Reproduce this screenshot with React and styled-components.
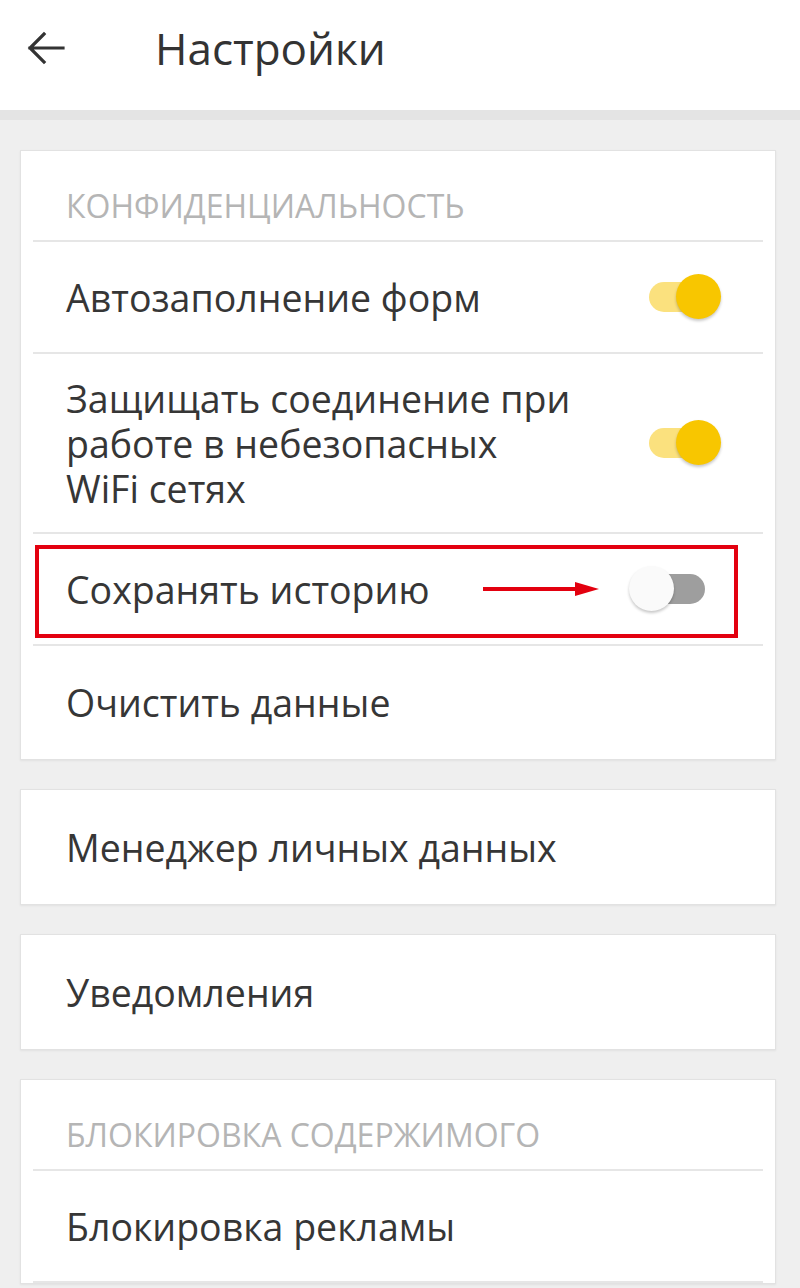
import React from "react";
import styled, { createGlobalStyle } from "styled-components";

const GlobalStyle = createGlobalStyle`
  html, body {
    margin: 0;
    padding: 0;
    background: #efefef;
    font-family: "Open Sans", "Noto Sans", sans-serif;
  }
`;

const Page = styled.div`
  width: 800px;
  height: 1288px;
  overflow: hidden;
  background: #efefef;
  display: flex;
  flex-direction: column;
`;

const Header = styled.header`
  height: 120px;
  background: #fff;
  display: flex;
  align-items: center;
  padding-left: 26px;
  box-sizing: border-box;
  border-bottom: 10px solid #e4e4e4;
  flex-shrink: 0;
`;

const BackButton = styled.div`
  width: 40px;
  height: 40px;
  display: flex;
  align-items: center;
  justify-content: center;
  margin-right: 89px;
  margin-top: -14px;
`;

const Title = styled.h1`
  margin: 0;
  margin-top: -14px;
  font-size: 44px;
  font-weight: 400;
  color: #333;
`;

const List = styled.div`
  display: flex;
  flex-direction: column;
  gap: 29px;
  padding: 30px 24px 0 20px;
`;

const Card = styled.section`
  background: #fff;
  border: 1px solid #e2e2e2;
  box-shadow: 0 1px 2px rgba(0, 0, 0, 0.06);
  padding: 0 12px;
`;

const SectionTitle = styled.div`
  height: 91px;
  display: flex;
  align-items: flex-end;
  padding: 0 0 14px 33px;
  box-sizing: border-box;
  font-size: 32px;
  line-height: 40px;
  color: #b5b5b5;
  border-bottom: 2px solid #e6e6e6;
`;

const Row = styled.div`
  display: flex;
  align-items: center;
  justify-content: space-between;
  min-height: ${(p) => p.$h || 112}px;
  box-sizing: border-box;
  padding: 0 40px 0 33px;
  border-bottom: ${(p) => (p.$last ? "none" : "2px solid #e6e6e6")};
  position: relative;
`;

const Label = styled.div`
  font-size: 37.5px;
  line-height: 45px;
  color: #363636;
  max-width: ${(p) => p.$max || 560}px;
`;

const Track = styled.div`
  width: 58px;
  height: 30px;
  border-radius: 15px;
  background: ${(p) => (p.$on ? "#fbe17e" : "#9e9e9e")};
  position: relative;
  margin-right: ${(p) => (p.$on ? 16 : 18)}px;
`;

const Thumb = styled.div`
  position: absolute;
  top: -8px;
  ${(p) => (p.$on ? "right: -14px;" : "left: -18px;")}
  width: 45px;
  height: 45px;
  border-radius: 50%;
  background: ${(p) => (p.$on ? "#f8c600" : "#fafafa")};
  box-shadow: 0 2px 3px rgba(0, 0, 0, 0.22);
`;

const Highlight = styled.div`
  position: absolute;
  left: 2px;
  right: 25px;
  top: 11px;
  bottom: 6px;
  border: 4px solid #e3000f;
  pointer-events: none;
`;

const Arrow = styled.svg`
  position: absolute;
  left: 450px;
  top: 50%;
  transform: translateY(-50%);
`;

const Toggle = ({ on }) => (
  <Track $on={on}>
    <Thumb $on={on} />
  </Track>
);

const BackArrow = () => (
  <svg width="40" height="34" viewBox="0 0 40 34">
    <path
      d="M37 17H4M18 3L4 17l14 14"
      fill="none"
      stroke="#333"
      strokeWidth="3.2"
      strokeLinecap="square"
    />
  </svg>
);

export default function App() {
  return (
    <Page>
      <GlobalStyle />
      <Header>
        <BackButton>
          <BackArrow />
        </BackButton>
        <Title>Настройки</Title>
      </Header>
      <List>
        <Card>
          <SectionTitle>КОНФИДЕНЦИАЛЬНОСТЬ</SectionTitle>
          <Row>
            <Label>Автозаполнение форм</Label>
            <Toggle on />
          </Row>
          <Row $h={180}>
            <Label $max={508}>
              Защищать соединение при работе в небезопасных WiFi сетях
            </Label>
            <Toggle on />
          </Row>
          <Row>
            <Label>Сохранять историю</Label>
            <Arrow width="120" height="16" viewBox="0 0 120 16">
              <path d="M0 8h96" stroke="#e3000f" strokeWidth="4" />
              <path d="M92 1l24 7-24 7z" fill="#e3000f" />
            </Arrow>
            <Toggle />
            <Highlight />
          </Row>
          <Row $last $h={113}>
            <Label>Очистить данные</Label>
          </Row>
        </Card>
        <Card>
          <Row $last $h={114}>
            <Label>Менеджер личных данных</Label>
          </Row>
        </Card>
        <Card>
          <Row $last $h={114}>
            <Label>Уведомления</Label>
          </Row>
        </Card>
        <Card>
          <SectionTitle>БЛОКИРОВКА СОДЕРЖИМОГО</SectionTitle>
          <Row>
            <Label>Блокировка рекламы</Label>
          </Row>
        </Card>
      </List>
    </Page>
  );
}
